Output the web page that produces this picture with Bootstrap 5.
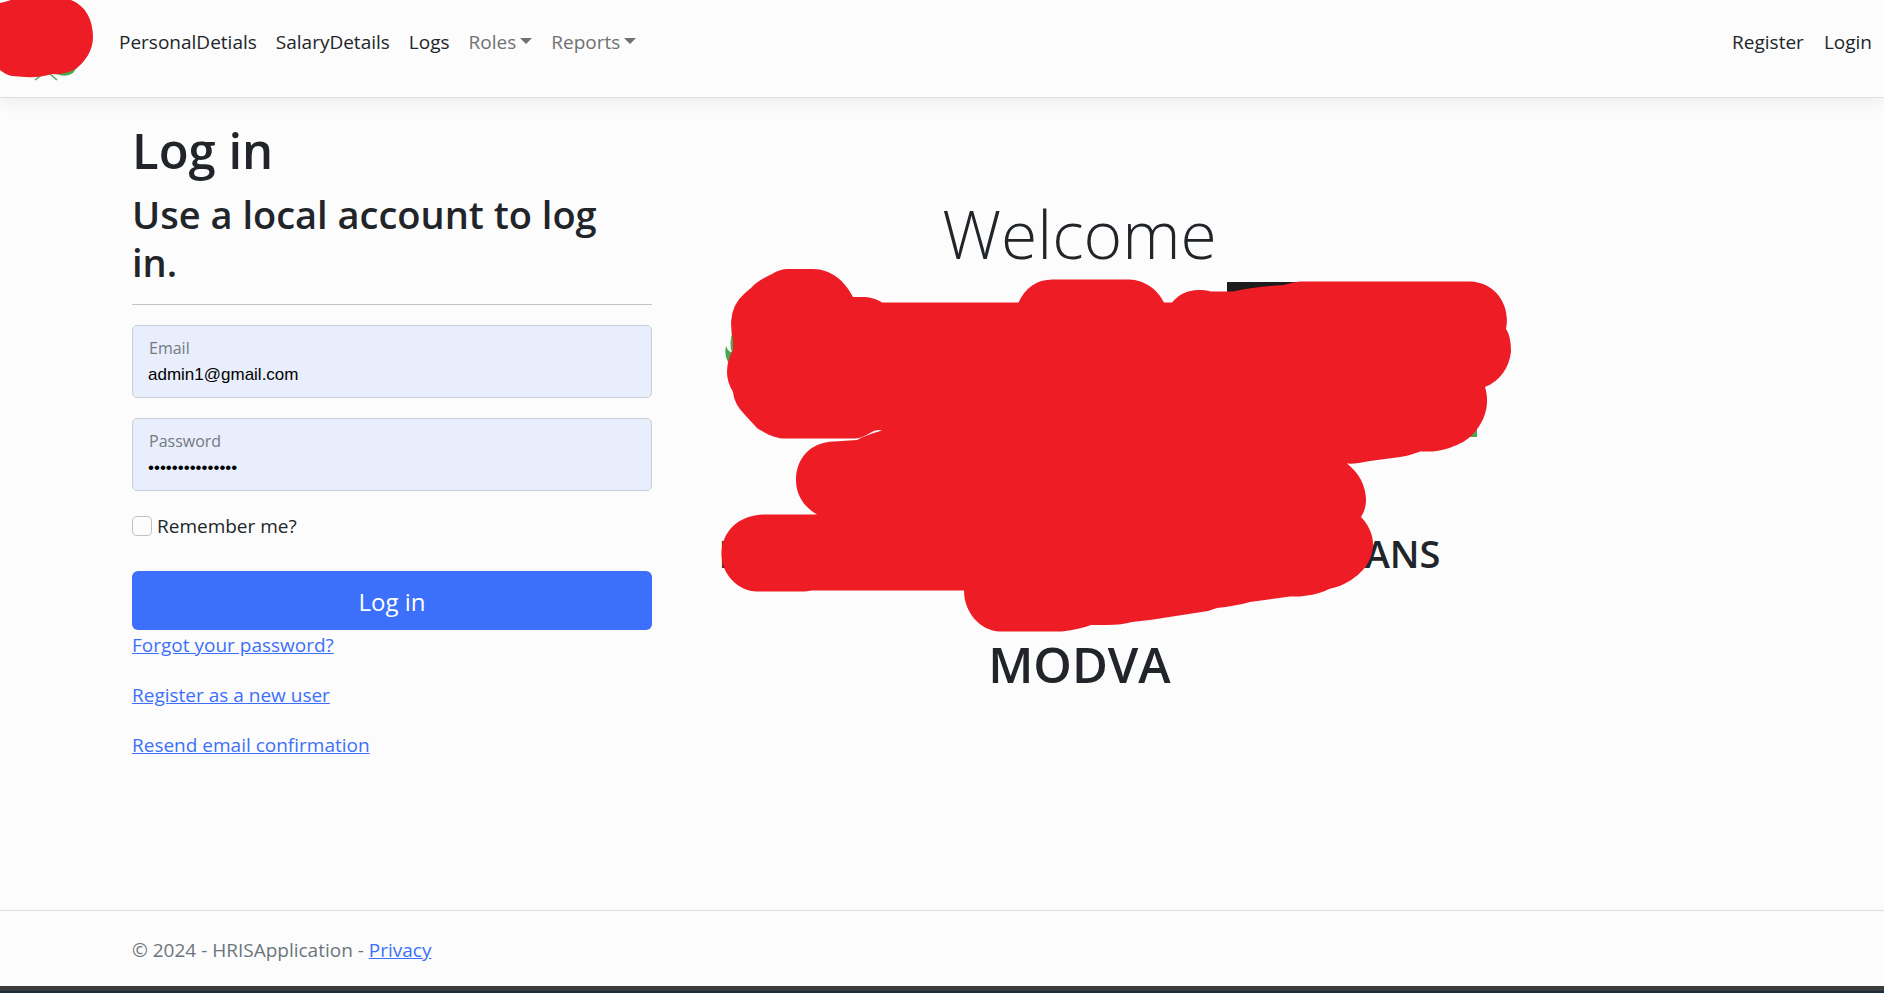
<!DOCTYPE html>
<html lang="en">
<head>
<meta charset="utf-8">
<meta name="viewport" content="width=device-width, initial-scale=1">
<title>Log in - HRISApplication</title>
<link href="https://cdn.jsdelivr.net/npm/bootstrap@5.3.0/dist/css/bootstrap.min.css" rel="stylesheet">
<style>
  html { font-size: 20px; }
  body { font-family: "Open Sans", sans-serif; font-size: 19px; line-height: 30px; background: #fcfcfc; color: #212529; }
  h1, h2 { font-weight: 600; }
  h1 { font-size: 49px; line-height: 60px; }
  h2 { font-size: 38px; line-height: 48px; }
  a { color: #3c70fa; }
  .site-nav { height: 98px; padding: 22px 2px 0 109px; box-shadow: 0 5px 15px rgba(0,0,0,.06); border-bottom: 1px solid #dedfe1; position: relative; }
  .site-nav .nav-link { padding: 5px 10px; color: #212529; }
  .nav-main .nav-link { padding: 5px 9px 5px 10px; }
  .site-nav .dropdown-toggle { color: #707172; }
  .dropdown-toggle::after { margin-left: 4px; border-width: 6px 6px 0; vertical-align: 5px; }
  .brand-mark { position: absolute; left: 0; top: 0; }
  .page-wrap { max-width: 1650px; }
  .page-main { padding-top: 22px; }
  .rule { border-top: 1px solid #c2c3c4; opacity: 1; margin: 18px 0 20px; }
  .field .form-control, .field .form-control:not(:placeholder-shown) { height: 73px; font: 17px/24px "Liberation Sans", sans-serif; color: #000; background: #e8eefc; border: 1px solid #c9ced8; border-radius: 5px; padding: 36px 15px 10px; }
  .field > label, .field > .form-control:focus ~ label, .field > .form-control:not(:placeholder-shown) ~ label { transform: none; font-size: 16px; line-height: 24px; padding: 10px 16px; color: #75797f; opacity: 1; height: auto; }
  .field > label::after { display: none; }
  .remember-row { margin-bottom: 30px; }
  .tick { width: 20px; height: 20px; margin: 0; border-color: #bfbfbf; border-radius: 5px; background-color: #fcfcfc; }
  .btn-login { background: #3c70fa; border: 0; color: #fff; font-size: 24px; line-height: 38px; padding: 12px 20px 9px; border-radius: 6px; }
  .welcome { font-size: 66px; line-height: 84px; font-weight: 300; margin: 71px 0 0; }
  .emblems { height: 254px; }
  .org-line { max-width: 722px; }
  .cover { position: absolute; left: 50px; top: 140px; }
  .modva { margin-top: 57px; }
  .site-footer { border-top: 1px solid #dee0e6; padding: 24px 0 21px; color: #6c757d; }
  .window-edge { height: 7px; background: #3a3b3c; border-bottom: 2px solid #1b2b40; }
</style>
</head>
<body class="min-vh-100 d-flex flex-column">
<header>
  <nav class="site-nav d-flex align-items-start justify-content-between">
    <svg class="brand-mark" width="100" height="82" viewBox="0 0 100 82" aria-hidden="true">
      <path d="M35 80L43 74M50 74L57 80" stroke="#4da54f" stroke-width="1.500" fill="none"/>
      <path d="M56 74Q66 78 73 73L78 66L62 70Z" fill="#4da54f"/>
      <path d="M0 3Q5 2 11 0H71C86 6 93 20 93 37C93 51 85 61 77 68Q66 75 52 74Q38 79 12 76Q6 75 0 70Z" fill="#ee1c25"/>
    </svg>
    <ul class="nav nav-main">
      <li class="nav-item"><a class="nav-link" href="#">PersonalDetials</a></li>
      <li class="nav-item"><a class="nav-link" href="#">SalaryDetails</a></li>
      <li class="nav-item"><a class="nav-link" href="#">Logs</a></li>
      <li class="nav-item dropdown"><a class="nav-link dropdown-toggle" href="#" data-bs-toggle="dropdown">Roles</a></li>
      <li class="nav-item dropdown"><a class="nav-link dropdown-toggle" href="#" data-bs-toggle="dropdown">Reports</a></li>
    </ul>
    <ul class="nav">
      <li class="nav-item"><a class="nav-link" href="#">Register</a></li>
      <li class="nav-item"><a class="nav-link" href="#">Login</a></li>
    </ul>
  </nav>
</header>

<main class="container page-wrap page-main flex-grow-1">
  <div class="row">
    <div class="col-md-4">
      <h1>Log in</h1>
      <form>
        <h2 class="pe-3">Use a local account to log in.</h2>
        <hr class="rule">
        <div class="form-floating field mb-3">
          <input type="email" class="form-control" id="email" value="admin1@gmail.com" placeholder="Email">
          <label for="email">Email</label>
        </div>
        <div class="form-floating field mb-3">
          <input type="password" class="form-control" id="password" value="abcdefghijklmno" placeholder="Password">
          <label for="password">Password</label>
        </div>
        <div class="remember-row d-flex align-items-center gap-1">
          <input type="checkbox" class="form-check-input tick" id="remember">
          <label for="remember">Remember me?</label>
        </div>
        <button type="button" class="btn btn-login w-100">Log in</button>
        <p class="mb-3"><a href="#">Forgot your password?</a></p>
        <p class="mb-3"><a href="#">Register as a new user</a></p>
        <p class="mb-3"><a href="#">Resend email confirmation</a></p>
      </form>
    </div>
    <div class="col-md-6 text-center position-relative">
      <h1 class="welcome">Welcome</h1>
      <div class="emblems"></div>
      <h2 class="org-line d-flex justify-content-between mx-auto mb-0"><span>I</span><span>ANS</span></h2>
      <h1 class="modva">MODVA</h1>
      <svg class="cover" width="800" height="380" viewBox="717 260 800 380" aria-hidden="true">
        <path d="M1227 282H1300V296H1227Z" fill="#1e1b1c"/>
        <path d="M732 333Q729 345 732 353L740 350V330ZM726 346Q724 355 728 362L738 352Q729 355 726 346ZM1465 425H1477V437H1465Z" fill="#4da54f"/>
        <path fill="#ee1c25" d="M788 269H813C831 269 845 281 853 297H862C870 297 877 299 882 302.500H1018.500C1025 288 1037 279 1054 279.500H1129C1145 280 1158 290 1164 302.500H1172C1180 293 1192 287 1211 291.500H1233C1250 288 1265 286 1284 285Q1292 282 1300 281.500H1470C1495 282 1511 305 1506 329C1510 335 1511 343 1511 352C1509 368 1500 381 1485 387C1490 403 1486 421 1472 435C1462 446 1440 451 1433 451.500H1420C1413 454 1408 456 1400 457L1370 461C1360 463 1353 464 1347 463.500C1358 472 1366 485 1366 500C1366 507 1364 512 1361 517C1368 524 1373 534 1373 544C1373 562 1361 576 1342 585C1335 588 1330 588 1325 591Q1315 595 1300 596.500H1290L1250 602Q1235 606 1217 608L1208 611L1150 620Q1140 621 1132 622Q1122 625 1107 625H1091Q1080 629 1062 631.500H1000C980 631 964 612 964 590.500H812L805 591.500H757C738 591 721 574 721.500 553C722 532 738 515 764 514.500H817C804 507 796 495 796 480C796 459 810 442 834 441.500L857 440Q866 435 882 430.500Q876 429 870 433Q862 438 855 438.500H783C772 438 762 431 757 428L745 415Q734 404 733 392Q727 382 727 372Q727 360 733 350V340Q731 332 731 322Q732 304 745 293L751 288Q757 281 772 274Q780 269 788 269Z"/>
      </svg>
    </div>
  </div>
</main>

<footer class="site-footer">
  <div class="container page-wrap">&copy; 2024 - HRISApplication - <a href="#">Privacy</a></div>
</footer>
<div class="window-edge"></div>
<script src="https://cdn.jsdelivr.net/npm/bootstrap@5.3.0/dist/js/bootstrap.bundle.min.js"></script>
</body>
</html>
